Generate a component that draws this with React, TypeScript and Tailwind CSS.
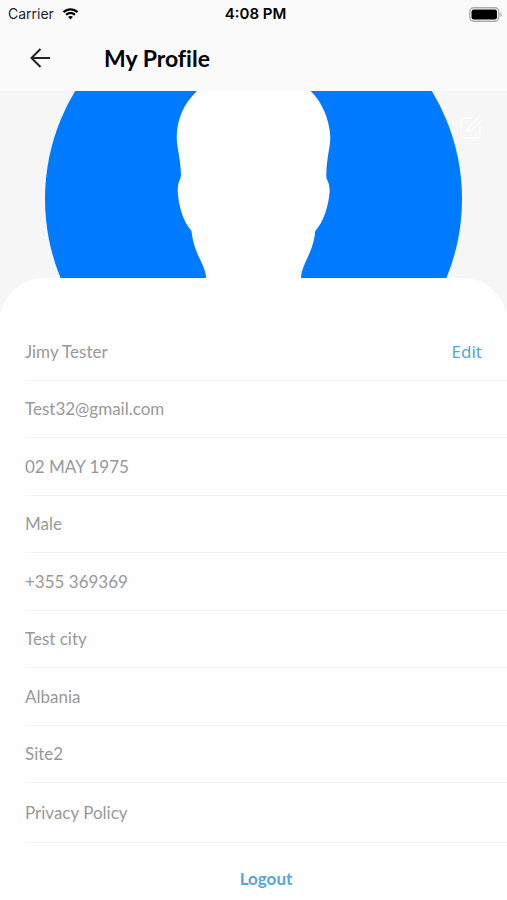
const details: string[] = [
  "Test32@gmail.com",
  "02 MAY 1975",
  "Male",
  "+355 369369",
  "Test city",
  "Albania",
  "Site2",
];

function StatusBar() {
  return (
    <div className="grid h-7 grid-cols-3 items-center pl-2 pr-1 font-['Inter','Liberation_Sans',sans-serif] text-sm text-[#222]">
      <div className="flex items-center gap-2">
        <span>Carrier</span>
        <svg className="h-3 w-[17px]" viewBox="0 0 17 12" aria-hidden="true">
          <path
            d="M8.5 2.4c2.3 0 4.4.9 6 2.4.1.1.3.1.4 0l1.2-1.2c.1-.1.1-.3 0-.4C12 -.7 5-.7.9 3.200c-.1.100-.1.300 0 .4l1.200 1.200c.1.1.3.1.4 0 1.600-1.500 3.700-2.400 6-2.400Zm0 3.800c1.300 0 2.500.5 3.400 1.300.1.100.3.100.4 0l1.200-1.200c.1-.1.1-.3 0-.4-2.600-2.500-7.400-2.500-10 0-.1.100-.1.300 0 .4l1.200 1.200c.1.100.3.100.4 0 .9-.8 2.100-1.300 3.400-1.300Zm2.300 2.500c.1.100.1.300 0 .4l-2.100 2.100c-.1.100-.3.100-.4 0L6.200 9.100c-.1-.1-.1-.3 0-.4 1.300-1.100 3.300-1.100 4.600 0Z"
            fill="#000"
          />
        </svg>
      </div>
      <span className="text-center text-[15px] font-semibold text-black">4:08 PM</span>
      <svg
        className="h-[15px] w-[34px] justify-self-end"
        viewBox="0 0 34 15"
        aria-label="Battery full"
      >
        <rect x="0.8" y="0.8" width="29" height="13.400" rx="4" fill="#fff" stroke="#aaa" strokeWidth="1.400" />
        <rect x="2.500" y="2.500" width="25.500" height="10" rx="2.200" fill="#000" />
        <path d="M31.300 5.200c1.800.8 1.800 3.800 0 4.600Z" fill="#aaa" />
      </svg>
    </div>
  );
}

function Avatar() {
  return (
    <svg className="block w-full" viewBox="0 0 507 187" role="img" aria-label="Profile photo">
      <circle cx="253.500" cy="108" r="208.500" fill="#007aff" />
      <path
        d="M197 0C184 12 177 28 176.700 45.700C176.700 57 180.500 66 181 84C181 88 177.700 90 177.700 100C178.500 115 183 130 191.500 140C194 164 206 174 206 187H301C301.500 173 313 163 315.300 140C324 130 328.500 115 329.700 100C329.700 90 326.300 90 326.300 85C326.500 66 330.300 57 330.300 46C329.500 28 322 11 310.700 0Z"
        fill="#fff"
      />
    </svg>
  );
}

export default function App() {
  return (
    <div className="min-h-screen bg-[#fefefe] font-['Lato','Open_Sans',sans-serif] text-[17px] leading-6 text-[#999]">
      <header className="bg-[#fafafa] pb-[3px]">
        <StatusBar />
        <div className="flex h-[60px] items-center gap-[52px] pl-7">
          <button type="button" aria-label="Back" className="h-6 w-6">
            <svg className="h-6 w-6" viewBox="0 0 24 24" fill="none" stroke="#222" strokeWidth="2">
              <path d="M22 12H3.500M12.500 3L3.500 12L12.500 21" />
            </svg>
          </button>
          <h1 className="text-[23px] font-bold leading-7 text-black [font-variant-ligatures:none]">
            My Profile
          </h1>
        </div>
      </header>

      <main>
        <div className="relative bg-[#f6f6f6] pb-[34px]">
          <Avatar />
          <button type="button" aria-label="Edit photo" className="absolute right-6 top-6 h-6 w-6">
            <svg
              className="h-6 w-6"
              viewBox="0 0 24 24"
              fill="none"
              stroke="#fdfdfd"
              strokeWidth="1.500"
              strokeLinecap="round"
            >
              <path d="M12 3H5a3 3 0 0 0-3 3v14a3 3 0 0 0 3 3h13a3 3 0 0 0 3-3v-8" />
              <path d="M20 2L10 12l-1 4 4-1L23 5" />
            </svg>
          </button>
        </div>

        <section className="relative -mt-[34px] rounded-t-[44px] bg-[#fefefe] pb-2 pt-[45px]">
          <div className="ml-[25px]">
            <ul>
              <li className="flex h-[58px] items-center justify-between border-b border-[#f4f4f4] pr-[25px]">
                <span>Jimy Tester</span>
                <button
                  type="button"
                  className="font-['Noto_Sans','Open_Sans',sans-serif] text-[17px] text-[#55a6dc]"
                >
                  Edit
                </button>
              </li>
              {details.map((value) => (
                <li
                  key={value}
                  className="flex h-[57px] items-center border-b border-[#f4f4f4] odd:h-[58px]"
                >
                  {value}
                </li>
              ))}
              <li className="flex h-[60px] items-center border-b border-[#f4f4f4]">
                <a href="#privacy">Privacy Policy</a>
              </li>
            </ul>
            <div className="flex justify-center pt-6">
              <button type="button" className="font-bold text-[#55a6dc]">
                Logout
              </button>
            </div>
          </div>
        </section>
      </main>
    </div>
  );
}
